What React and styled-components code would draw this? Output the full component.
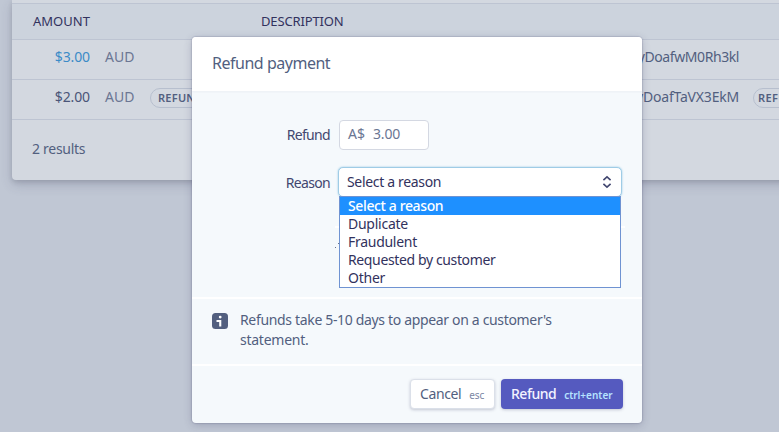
import React from "react";
import styled, { createGlobalStyle } from "styled-components";

const Global = createGlobalStyle`
  *, *::before, *::after { box-sizing: border-box; }
  html, body { margin: 0; height: 100%; overflow: hidden; }
  body {
    background: #c0c7d4;
    font-family: "Noto Sans", "Open Sans", sans-serif;
    font-size: 14px;
    color: #525f7f;
  }
`;

const Page = styled.div`
  position: relative;
  height: 432px;
  width: 779px;
  overflow: hidden;
`;

const TableCard = styled.section`
  margin-left: 12px;
  width: 790px;
  height: 180px;
  background: #d3d8e0;
  border-radius: 0 0 4px 4px;
  box-shadow: 0 5px 12px rgba(60, 66, 100, 0.2), 0 2px 5px rgba(0, 0, 0, 0.12);
  padding-top: 3px;
`;

const HeadRow = styled.div`
  height: 37px;
  display: flex;
  align-items: center;
  padding: 0 0 1px 21px;
  background: #ccd3dd;
  border-top: 1px solid #bdc4d2;
  border-bottom: 1px solid #bdc4d2;
  color: #32325d;
  font-size: 13px;
`;

const HeadCell = styled.div`
  width: ${(p) => p.$width}px;
`;

const Row = styled.div`
  height: 40px;
  display: flex;
  align-items: center;
  padding-bottom: 6px;
  border-bottom: 1px solid #bdc4d2;
`;

const Amount = styled.div`
  width: 78px;
  text-align: right;
  color: ${(p) => (p.$link ? "#3b8bc7" : "#4a5578")};
`;

const Currency = styled.div`
  width: 45px;
  margin-left: 15px;
  color: #6b7693;
`;

const PaymentId = styled.div`
  margin-left: auto;
  width: 120px;
  margin-right: ${(p) => p.$end}px;
  display: flex;
  justify-content: flex-end;
  white-space: nowrap;
`;

const Pill = styled.div`
  width: 82px;
  height: 20px;
  margin-top: 2px;
  margin-right: ${(p) => p.$end || 0}px;
  padding-left: ${(p) => p.$inset}px;
  border: 1px solid #b7bfce;
  border-radius: 10px;
  font-size: 11px;
  line-height: 18px;
  font-weight: 600;
  white-space: nowrap;
  flex: none;
`;

const Results = styled.div`
  padding: 19px 0 0 20px;
  line-height: 20px;
`;

const Text = styled.span`
  display: inline-block;
  white-space: nowrap;
  letter-spacing: ${(p) => p.$track || 0}px;
`;

const Modal = styled.div`
  position: absolute;
  left: 192px;
  top: 37px;
  width: 450px;
  height: 386px;
  display: flex;
  flex-direction: column;
  background: #f5f9fc;
  border-radius: 4px;
  overflow: hidden;
  box-shadow: 0 0 1px 1px rgba(50, 50, 93, 0.14), 0 2px 9px rgba(50, 50, 93, 0.24);
`;

const ModalHeader = styled.header`
  height: 54px;
  padding: 0 20px 2px;
  display: flex;
  align-items: center;
  background: #fff;
  box-shadow: 0 1px 2px rgba(50, 50, 93, 0.05);
  font-size: 16px;
`;

const Form = styled.div`
  height: 206px;
  padding-top: 29px;
  display: flex;
  flex-direction: column;
`;

const Field = styled.div`
  display: flex;
  align-items: center;
  height: 30px;
  margin-bottom: ${(p) => p.$gap || 0}px;
`;

const Label = styled.label`
  width: 138px;
  margin-right: ${(p) => p.$gap}px;
  padding-bottom: ${(p) => p.$lift || 0}px;
  text-align: right;
  color: #424770;
`;

const MoneyInput = styled.div`
  width: 90px;
  height: 30px;
  display: flex;
  gap: 8px;
  align-items: center;
  padding: 0 0 3px 8px;
  background: #fff;
  border: 1px solid #d4d8e2;
  border-radius: 4px;
  color: #6b7693;
`;

const Select = styled.div`
  width: 284px;
  height: 30px;
  display: flex;
  align-items: center;
  justify-content: space-between;
  padding: 0 9px 0 8px;
  background: #fff;
  border: 1px solid #9fcce6;
  border-radius: 5px;
  box-shadow: 0 0 2px rgba(130, 190, 225, 0.9);
  color: #32325d;

  span { padding-bottom: 2px; }
`;

const FieldDivider = styled.div`
  width: 290px;
  height: 2px;
  margin: 29px 0 0 143px;
  background: #fff;
`;

const Menu = styled.ul`
  position: absolute;
  left: 147px;
  top: 159px;
  width: 282px;
  height: 92px;
  margin: 0;
  padding: 0;
  list-style: none;
  background: #fff;
  border: 1px solid #6f93d2;
`;

const Option = styled.li`
  height: 18px;
  line-height: 17px;
  padding-left: 8px;
  background: ${(p) => (p.$active ? "#1e90ff" : "#fff")};
  color: ${(p) => (p.$active ? "#fff" : "#32325d")};
  font-weight: ${(p) => (p.$active ? 500 : 400)};
`;

const Notice = styled.div`
  height: 69px;
  border-top: 2px solid #fff;
  border-bottom: 2px solid #fff;
  display: flex;
  gap: 12px;
  padding: 11px 20px 0;
  line-height: 20px;

  svg { flex: none; margin-top: 3px; }
`;

const NoticeText = styled.div`
  display: flex;
  flex-direction: column;
  align-items: flex-start;
`;

const Footer = styled.footer`
  height: 57px;
  display: flex;
  justify-content: flex-end;
  gap: 6px;
  padding: 13px 19px 0;
`;

const Button = styled.button`
  width: ${(p) => (p.$primary ? 122 : 85)}px;
  height: 30px;
  padding: 0 0 1px ${(p) => (p.$primary ? 10 : 9)}px;
  display: flex;
  align-items: baseline;
  gap: 8px;
  border: ${(p) => (p.$primary ? "0" : "1px solid #dbe0e9")};
  border-radius: 4px;
  background: ${(p) => (p.$primary ? "#555abf" : "#fff")};
  color: ${(p) => (p.$primary ? "#f3f3ff" : "#525f7f")};
  font: inherit;
  line-height: ${(p) => (p.$primary ? 29 : 27)}px;
  font-weight: ${(p) => (p.$primary ? 500 : 400)};
  box-shadow: 0 1px 3px rgba(50, 50, 93, 0.25);
`;

const Key = styled(Text)`
  font-size: 10px;
  color: ${(p) => (p.$primary ? "#b6e3ff" : "#7a86a3")};
  font-weight: ${(p) => (p.$primary ? 600 : 400)};
`;

const HiddenEdge = styled.svg`
  position: absolute;
  left: 142px;
  top: 187px;
`;

const options = [
  ["Select a reason", -0.38],
  ["Duplicate", -0.25],
  ["Fraudulent", -0.28],
  ["Requested by customer", -0.37],
  ["Other", -0.25],
];

export default function App() {
  return (
    <Page>
      <Global />
      <TableCard>
        <HeadRow>
          <HeadCell $width={228}><Text>AMOUNT</Text></HeadCell>
          <HeadCell $width={120}><Text $track={-0.15}>DESCRIPTION</Text></HeadCell>
        </HeadRow>
        <Row>
          <Amount $link><Text $track={-0.12}>$3.00</Text></Amount>
          <Currency><Text>AUD</Text></Currency>
          <PaymentId $end={63}><Text $track={-0.42}>yDoafwM0Rh3kl</Text></PaymentId>
        </Row>
        <Row>
          <Amount><Text $track={-0.12}>$2.00</Text></Amount>
          <Currency><Text>AUD</Text></Currency>
          <Pill $inset={7}><Text $track={0.25}>REFUNDED</Text></Pill>
          <PaymentId $end={14}><Text $track={-0.2}>yDoafTaVX3EkM</Text></PaymentId>
          <Pill $inset={4} $end={-33}><Text $track={0.45}>REFUNDED</Text></Pill>
        </Row>
        <Results><Text $track={-0.28}>2 results</Text></Results>
      </TableCard>

      <Modal role="dialog">
        <ModalHeader><Text $track={-0.48}>Refund payment</Text></ModalHeader>
        <Form>
          <Field $gap={17}>
            <Label $gap={9} $lift={2}><Text $track={-0.68}>Refund</Text></Label>
            <MoneyInput><Text>A$</Text><Text $track={-0.15}>3.00</Text></MoneyInput>
          </Field>
          <Field>
            <Label $gap={8}><Text $track={-0.68}>Reason</Text></Label>
            <Select>
              <Text $track={-0.33}>Select a reason</Text>
              <svg width="10" height="14" viewBox="0 0 10 14" fill="none" stroke="#424770" strokeWidth="1.6">
                <path d="M1.4 5.2 5 1.8 8.6 5.2M1.4 8.8 5 12.2 8.6 8.8" />
              </svg>
            </Select>
          </Field>
          <FieldDivider />
        </Form>
        <HiddenEdge width="6" height="30" viewBox="0 0 6 30">
          <path d="M1 23h1v1H1zM4 19h1v1H4z" fill="#68738f" />
        </HiddenEdge>
        <Menu>
          {options.map(([name, track], i) => (
            <Option key={name} $active={i === 0}><Text $track={track}>{name}</Text></Option>
          ))}
        </Menu>
        <Notice>
          <svg width="16" height="16" viewBox="0 0 16 16">
            <rect width="16" height="16" rx="3.5" fill="#525f7f" />
            <circle cx="8.2" cy="4.1" r="1.4" fill="#fff" />
            <path d="M4.5 7H9.3V13.5H7.2V9H4.5Z" fill="#fff" />
          </svg>
          <NoticeText>
            <Text $track={-0.335}>Refunds take 5-10 days to appear on a customer's</Text>
            <Text $track={-0.25}>statement.</Text>
          </NoticeText>
        </Notice>
        <Footer>
          <Button><Text $track={-0.4}>Cancel</Text><Key>esc</Key></Button>
          <Button $primary><Text $track={-0.5}>Refund</Text><Key $primary>ctrl+enter</Key></Button>
        </Footer>
      </Modal>
    </Page>
  );
}
